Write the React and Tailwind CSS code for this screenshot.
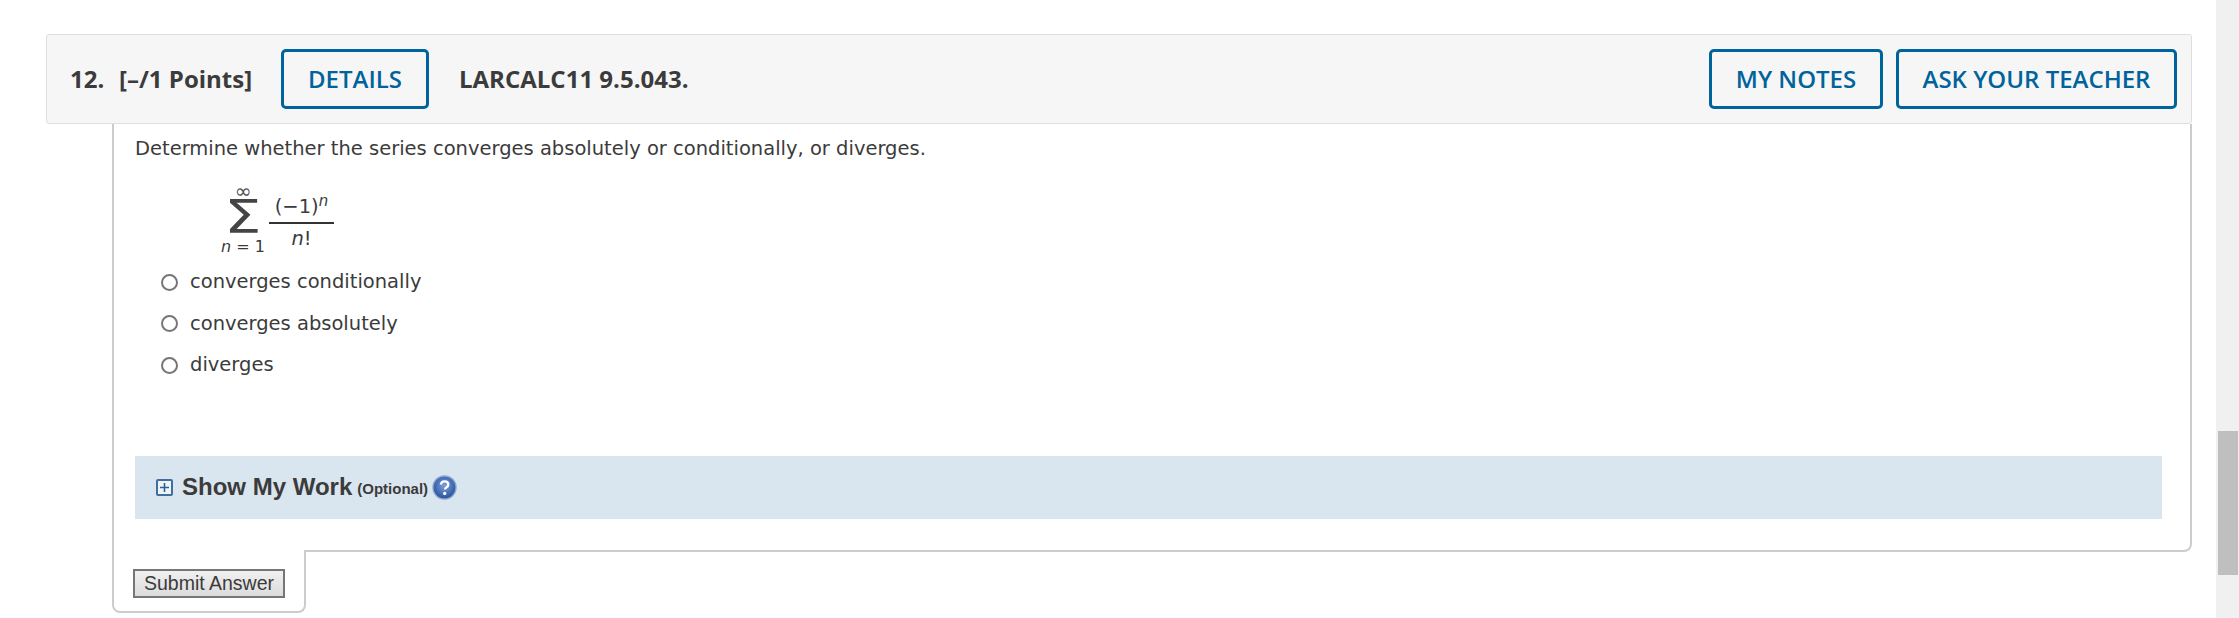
import React from 'react';

const openSans = { fontFamily: '"Open Sans", sans-serif' };

function OutlineButton({ children, className }) {
  return (
    <button className={`h-[60px] border-[3px] border-[#00639c] rounded-[5px] text-[#00639c] text-[24px] font-semibold ${className}`}>
      {children}
    </button>
  );
}

function Radio({ label }) {
  return (
    <label className="flex items-center h-[22px] mb-[19.5px]">
      <span className="w-[17px] h-[17px] rounded-full border-2 border-[#767676] bg-white ml-[26px] mr-[12px]" />
      <span>{label}</span>
    </label>
  );
}

function HelpIcon() {
  return (
    <svg width="25" height="25" viewBox="0 0 25 25" className="ml-[4px]">
      <defs>
        <radialGradient id="help" cx="50%" cy="42%" r="62%">
          <stop offset="0%" stopColor="#7f9fd8" />
          <stop offset="65%" stopColor="#3f69b3" />
          <stop offset="100%" stopColor="#24488c" />
        </radialGradient>
      </defs>
      <circle cx="12.5" cy="12.5" r="11.5" fill="url(#help)" stroke="#8ea6cf" strokeWidth="1.4" />
      <path d="M8.8 9.6c.3-2.2 1.8-3.3 3.8-3.3 2.2 0 3.7 1.2 3.7 3.1 0 1.5-.8 2.3-1.9 3-1 .6-1.4 1.1-1.4 2.2" fill="none" stroke="#fff" strokeWidth="2.3" />
      <circle cx="12.7" cy="18.4" r="1.6" fill="#fff" />
    </svg>
  );
}

export default function App() {
  return (
    <div className="flex h-[618px] overflow-hidden bg-white">
      <div className="flex-1 pt-[34px] pl-[46px] pr-[24px]">
        {/* question header */}
        <div className="h-[90px] flex items-center bg-[#f6f6f6] border border-[#dedede] rounded-[3px] pl-[23px] pr-[14px] text-[#3b3b3b]" style={openSans}>
          <span className="text-[24px] font-bold w-[49px]">12.</span>
          <span className="text-[24px] font-bold w-[162px]">[–/1 Points]</span>
          <OutlineButton className="w-[148px]">DETAILS</OutlineButton>
          <span className="text-[24px] font-bold ml-[30px]">LARCALC11 9.5.043.</span>
          <OutlineButton className="w-[174px] ml-auto">MY NOTES</OutlineButton>
          <OutlineButton className="w-[281px] ml-[13px]">ASK YOUR TEACHER</OutlineButton>
        </div>

        {/* question body */}
        <div className="ml-[66px] h-[428px] border-x-2 border-b-2 border-[#cccccc] rounded-br-[8px] pl-[21px] pr-[28px] pt-[12px] text-[19.5px] text-[#3b3b3b]" style={{ fontFamily: '"DejaVu Sans", sans-serif' }}>
          <p className="leading-[25px]">Determine whether the series converges absolutely or conditionally, or diverges.</p>

          <div className="flex ml-[84px] mt-[23px] h-[73px]">
            <div className="w-[48px] flex flex-col items-center">
              <span className="text-[20px] leading-[14px] text-[#555]">∞</span>
              <span className="text-[47px] leading-[36px] mt-[1px] text-[#444] scale-x-[1.25]">Σ</span>
              <span className="text-[16px] leading-[20px] mt-[2px] whitespace-nowrap"><i>n</i> = 1</span>
            </div>
            <div className="w-[65px] ml-[2px] flex flex-col items-center">
              <span className="h-[29px] leading-[29px] mt-[8px] whitespace-nowrap">(−1)<sup className="text-[15px] leading-none"><i>n</i></sup></span>
              <span className="w-full h-[2px] bg-[#333] mt-[1px]" />
              <span className="leading-[28px] mt-[1px]"><i>n</i>!</span>
            </div>
          </div>

          <div className="mt-[14px]">
            <Radio label="converges conditionally" />
            <Radio label="converges absolutely" />
            <Radio label="diverges" />
          </div>

          <div className="mt-[80px] h-[63px] bg-[#d9e5ef] flex items-center pl-[21px]" style={{ fontFamily: '"Liberation Sans", sans-serif' }}>
            <span className="w-[17px] h-[17px] border-2 border-[#3f6f9f] rounded-[2px] bg-[#eef4fa] flex items-center justify-center mr-[9px]">
              <svg width="9" height="9" viewBox="0 0 9 9"><path d="M4.5 0v9M0 4.5h9" stroke="#2f5f8f" strokeWidth="1.6" /></svg>
            </span>
            <span className="text-[24px] font-bold text-[#3b3b3b] mb-[2px]">Show My Work</span>
            <span className="text-[15px] font-bold text-[#3b3b3b] ml-[5px] mt-[3px]">(Optional)</span>
            <HelpIcon />
          </div>
        </div>

        {/* submit tab */}
        <div className="relative ml-[66px] -mt-[2px] w-[194px] h-[63px] bg-white border-x-2 border-b-2 border-[#cccccc] rounded-b-[8px] pl-[19px] pt-[19px]">
          <button className="w-[152px] h-[29px] border-2 border-[#767676] bg-gradient-to-b from-[#f0f0f0] to-[#dcdcdc] text-[19.5px] leading-none text-[#3b3b3b]" style={{ fontFamily: '"Liberation Sans", sans-serif' }}>
            Submit Answer
          </button>
        </div>
      </div>

      {/* scrollbar */}
      <div className="w-[23px] bg-[#f0f0f0] pt-[431px] pl-[2px] pr-[1px]">
        <div className="h-[144px] bg-[#bfbfbf]" />
      </div>
    </div>
  );
}
